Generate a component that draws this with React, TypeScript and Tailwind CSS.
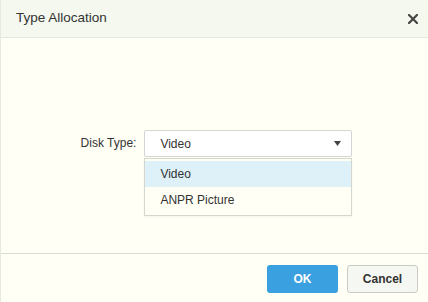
import React from "react";

export default function App() {
  return (
    <div
      className="w-[428px] h-[302px] flex flex-col bg-[#fffff6] border-l border-[#e6ebe0] text-[#333]"
      style={{ fontFamily: '"Liberation Sans", Arial, sans-serif' }}
    >
      <div className="h-[38px] shrink-0 flex items-center justify-between pl-[15px] pr-[8px] bg-[#f4f8ef] border-b border-[#e4e9de]">
        <span className="text-[13.5px] text-[#333]">Type Allocation</span>
        <svg width="10" height="10" viewBox="0 0 10 10" className="mr-[2px]">
          <path d="M1 1L9 9M9 1L1 9" stroke="#444" strokeWidth="2.2" strokeLinecap="square" />
        </svg>
      </div>
      <div className="flex-1 flex flex-col items-center pt-[92px]">
        <div className="flex items-start ml-[4px]">
          <span className="text-[12px] mr-[8px] leading-[26px] text-[#333]">Disk Type:</span>
          <div className="w-[208px] flex flex-col">
            <div className="h-[27px] flex items-center justify-between pl-[15px] pr-[10px] bg-white border border-[#d4d6cf] rounded-[2px]">
              <span className="text-[12px] text-[#333]">Video</span>
              <svg width="7" height="5" viewBox="0 0 7 5">
                <path d="M0 0H7L3.5 5Z" fill="#444" />
              </svg>
            </div>
            <div className="mt-[1px] bg-[#fffff6] border border-[#d4d6cf] py-[2px] shadow-[0_1px_2px_rgba(0,0,0,0.05)]">
              <div className="h-[26px] flex items-center pl-[15px] bg-[#def0f8] text-[12px]">Video</div>
              <div className="h-[26px] flex items-center pl-[15px] text-[12px]">ANPR Picture</div>
            </div>
          </div>
        </div>
      </div>
      <div className="h-[49px] shrink-0 border-t border-[#d9dcd3] flex items-center justify-end gap-[9px] pr-[10px] pt-[1px]">
        <button className="w-[71px] h-[28px] rounded-[3px] bg-[#3aa0e0] text-white text-[12px] font-bold">OK</button>
        <button className="w-[71px] h-[28px] rounded-[3px] bg-[#f5f7f2] border border-[#c9cbc4] text-[#333] text-[12px] font-bold">Cancel</button>
      </div>
    </div>
  );
}
